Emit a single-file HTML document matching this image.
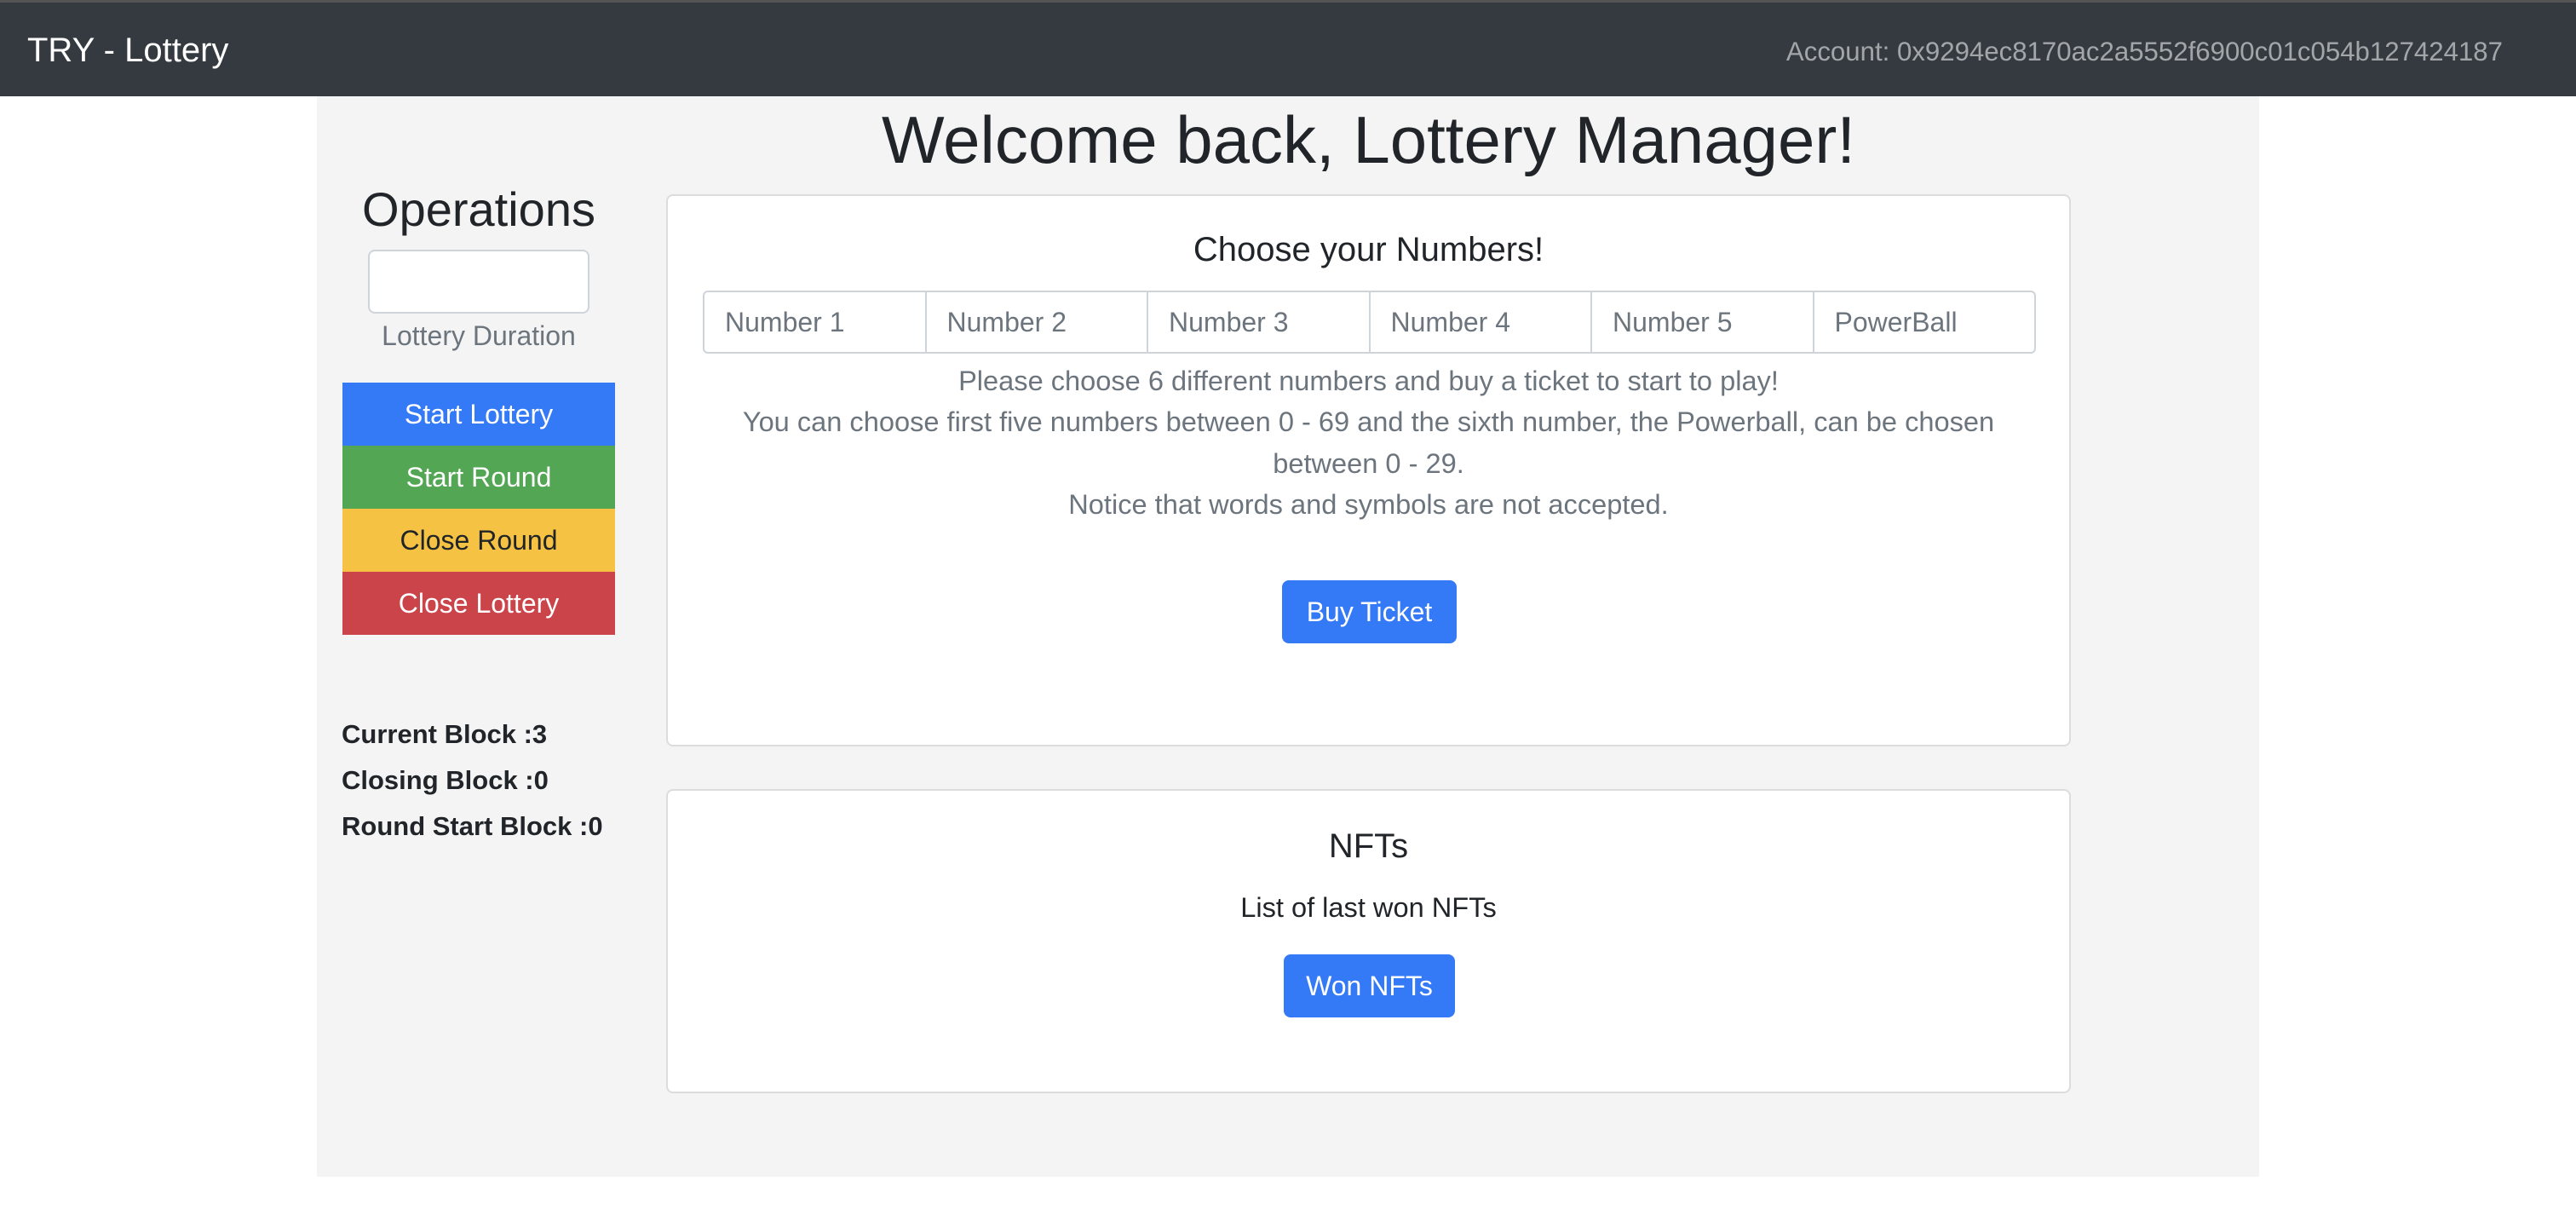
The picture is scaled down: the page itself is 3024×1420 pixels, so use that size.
<!DOCTYPE html>
<html><head><meta charset="utf-8"><style>
html,body{margin:0;padding:0}
body{width:1512px;height:710px;zoom:2;position:relative;overflow:hidden;background:#fff;font-family:"Liberation Sans",Arial,sans-serif;color:#212529}
.nav{position:absolute;left:0;top:0;width:1512px;height:56.5px;background:#343a40;border-top:1.5px solid #555;box-sizing:border-box}
.brand{position:absolute;left:16px;top:16px;font-size:20px;color:#fff;line-height:24px}
.acct{position:absolute;right:43px;top:19px;font-size:15.6px;color:rgba(255,255,255,.55);line-height:20px}
.wrap{position:absolute;left:186px;top:56.5px;width:1140px;height:634px;background:#f4f4f4}
.abs{position:absolute}
.h1{left:391px;width:824.5px;top:58px;font-size:39px;line-height:48px;text-align:center}
.ops{left:201px;width:160px;top:106px;font-size:28px;line-height:34px;text-align:center}
.inp{left:216px;top:146.7px;width:130px;height:37.5px;box-sizing:border-box;border:1px solid #ced4da;border-radius:4px;background:#fff}
.dur{left:201px;width:160px;top:186px;font-size:16px;line-height:22px;color:#6c757d;text-align:center}
.btn{left:201px;width:160px;height:37px;font-size:16px;line-height:37px;text-align:center;color:#fff}
.info{left:200.5px;font-size:15.5px;font-weight:bold;line-height:20px}
.card{left:391px;width:824.5px;background:#fff;border:1px solid #dcdcdc;border-radius:4px;box-sizing:border-box}
.cells{left:412.5px;top:170.7px;width:782.5px;height:37px;display:flex;border:1px solid #ced4da;box-sizing:border-box;border-radius:3px;background:#fff}
.cells div{flex:1;border-left:1px solid #ced4da;font-size:16px;color:#6c757d;line-height:35px;padding-left:12px}
.cells div:first-child{border-left:none}
.t{left:392px;width:822.5px;font-size:16.3px;line-height:24.1px;color:#6c757d;text-align:center}
.pb{background:#3479f6;color:#fff;border-radius:4px;font-size:16px;text-align:center;line-height:37px;height:37px}
</style></head><body>
<div class="nav"><div class="brand">TRY - Lottery</div><div class="acct">Account: 0x9294ec8170ac2a5552f6900c01c054b127424187</div></div>
<div class="wrap"></div>
<div class="abs h1">Welcome back, Lottery Manager!</div>
<div class="abs ops">Operations</div>
<div class="abs inp"></div>
<div class="abs dur">Lottery Duration</div>
<div class="abs btn" style="top:224.5px;background:#3479f6">Start Lottery</div>
<div class="abs btn" style="top:261.5px;background:#53a653">Start Round</div>
<div class="abs btn" style="top:298.5px;background:#f5c243;color:#212529">Close Round</div>
<div class="abs btn" style="top:335.5px;background:#cb444a">Close Lottery</div>
<div class="abs info" style="top:421px">Current Block :3</div>
<div class="abs info" style="top:448px">Closing Block :0</div>
<div class="abs info" style="top:475px">Round Start Block :0</div>

<div class="abs card" style="top:113.8px;height:324px"></div>
<div class="abs t" style="top:134px;font-size:20px;line-height:25px;color:#212529">Choose your Numbers!</div>
<div class="abs cells"><div>Number 1</div><div>Number 2</div><div>Number 3</div><div>Number 4</div><div>Number 5</div><div>PowerBall</div></div>
<div class="abs t" style="top:211.6px">Please choose 6 different numbers and buy a ticket to start to play!<br>You can choose first five numbers between 0 - 69 and the sixth number, the Powerball, can be chosen<br>between 0 - 29.<br>Notice that words and symbols are not accepted.</div>
<div class="abs pb" style="left:752.5px;top:340.4px;width:102.5px">Buy Ticket</div>

<div class="abs card" style="top:463px;height:178.5px"></div>
<div class="abs t" style="top:484px;font-size:20px;line-height:25px;color:#212529">NFTs</div>
<div class="abs t" style="top:520.3px;color:#212529">List of last won NFTs</div>
<div class="abs pb" style="left:753.5px;top:560px;width:100.5px">Won NFTs</div>
</body></html>
